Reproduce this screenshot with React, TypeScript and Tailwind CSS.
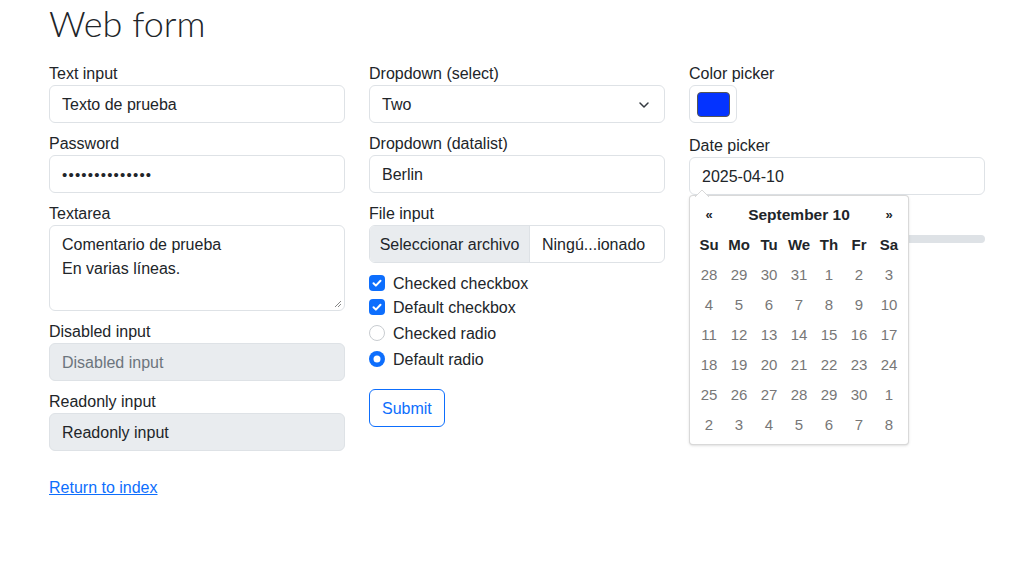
import React from 'react';

const font = { fontFamily: '"Liberation Sans", Arial, sans-serif' };
const titleFont = { fontFamily: 'Lato, "Liberation Sans", sans-serif' };

const Field = ({ label, children }: { label: string; children: React.ReactNode }) => (
    <div className="mb-2">
        <div className="pt-px leading-[23px]">{label}</div>
        {children}
    </div>
);

const Box = ({ children, className = '' }: { children?: React.ReactNode; className?: string }) => (
    <div
        className={`flex h-[38px] items-center rounded-md border border-[#dee2e6] px-3 pt-[2px] ${className}`}
    >
        {children}
    </div>
);

const CheckIcon = () => (
    <svg width="16" height="16" viewBox="0 0 16 16" className="mt-1 shrink-0">
        <rect width="16" height="16" rx="4" fill="#0d6efd" />
        <path d="M4.5 8.2l2.4 2.4 4.6-4.8" fill="none" stroke="#fff" strokeWidth="2" strokeLinecap="round" strokeLinejoin="round" />
    </svg>
);

const Radio = ({ on }: { on?: boolean }) => (
    <svg width="16" height="16" viewBox="0 0 16 16" className="mt-1 shrink-0">
        {on ? (
            <>
                <circle cx="8" cy="8" r="8" fill="#0d6efd" />
                <circle cx="8" cy="8" r="3.5" fill="#fff" />
            </>
        ) : (
            <circle cx="8" cy="8" r="7.5" fill="#fff" stroke="#c8ccd0" />
        )}
    </svg>
);

const Check = ({ label, radio, on, className = '' }: { label: string; radio?: boolean; on?: boolean; className?: string }) => (
    <div className={`flex h-6 gap-2 ${className}`}>
        {radio ? <Radio on={on} /> : <CheckIcon />}
        <span className="pt-px leading-[23px]">{label}</span>
    </div>
);

const weeks = [
    [28, 29, 30, 31, 1, 2, 3],
    [4, 5, 6, 7, 8, 9, 10],
    [11, 12, 13, 14, 15, 16, 17],
    [18, 19, 20, 21, 22, 23, 24],
    [25, 26, 27, 28, 29, 30, 1],
    [2, 3, 4, 5, 6, 7, 8],
];

const Calendar = () => (
    <div className="absolute top-[38px] left-0 z-10 w-[220px] rounded-[4px] border border-black/15 bg-white p-1 shadow-sm">
        <svg width="14" height="8" viewBox="0 0 14 8" className="absolute -top-[7px] left-[5px]">
            <path d="M0 8L7 1l7 7" fill="#fff" stroke="#d9d9d9" />
        </svg>
        <div className="flex h-[30px] items-center font-bold">
            <span className="w-[30px] text-center text-[13px]">«</span>
            <span className="w-[150px] text-center text-[15.5px]">September 10</span>
            <span className="w-[30px] text-center text-[13px]">»</span>
        </div>
        <div className="grid grid-cols-[repeat(7,30px)] text-center text-[15px]">
            {['Su', 'Mo', 'Tu', 'We', 'Th', 'Fr', 'Sa'].map((d) => (
                <div key={d} className="flex h-[30px] items-center justify-center font-bold">
                    {d}
                </div>
            ))}
            {weeks.flat().map((n, i) => (
                <div key={i} className="flex h-[30px] items-center justify-center text-[#777]">
                    {n}
                </div>
            ))}
        </div>
    </div>
);

export default function App() {
    return (
        <div className="min-h-[561px] bg-white text-base text-[#212529]" style={font}>
            <div className="mx-auto w-[960px] px-3 pt-px">
                <h1 className="mb-4 text-[36px] leading-[44px] font-light" style={titleFont}>
                    Web form
                </h1>
                <div className="grid grid-cols-3 gap-x-6">
                    <div>
                        <Field label="Text input">
                            <Box>Texto de prueba</Box>
                        </Field>
                        <Field label="Password">
                            <Box className="text-[15px] tracking-[1.2px]">••••••••••••••</Box>
                        </Field>
                        <Field label="Textarea">
                            <div className="relative h-[86px] rounded-md border border-[#dee2e6] px-3 pt-[7px] leading-6">
                                <div>Comentario de prueba</div>
                                <div>En varias líneas.</div>
                                <svg width="8" height="8" viewBox="0 0 8 8" className="absolute right-[2px] bottom-[2px]">
                                    <path d="M1 7L7 1M4 7L7 4" stroke="#888" strokeWidth="1" />
                                </svg>
                            </div>
                        </Field>
                        <Field label="Disabled input">
                            <Box className="bg-[#e9ecef] text-[#6c757d]">Disabled input</Box>
                        </Field>
                        <Field label="Readonly input">
                            <Box className="bg-[#e9ecef]">Readonly input</Box>
                        </Field>
                    </div>
                    <div>
                        <Field label="Dropdown (select)">
                            <Box className="justify-between">
                                <span>Two</span>
                                <svg width="16" height="12" viewBox="0 2 16 12">
                                    <path d="M4 6l4 4 4-4" fill="none" stroke="#343a40" strokeWidth="1.5" strokeLinecap="round" strokeLinejoin="round" />
                                </svg>
                            </Box>
                        </Field>
                        <Field label="Dropdown (datalist)">
                            <Box>Berlin</Box>
                        </Field>
                        <Field label="File input">
                            <div className="flex h-[38px] overflow-hidden rounded-md border border-[#dee2e6] pt-px">
                                <div className="-mt-px flex w-[160px] items-center justify-center border-r border-[#dee2e6] bg-[#e9ecef] pt-px whitespace-nowrap">
                                    Seleccionar archivo
                                </div>
                                <div className="flex items-center px-3 whitespace-nowrap">Ningú...ionado</div>
                            </div>
                        </Field>
                        <Check label="Checked checkbox" />
                        <Check label="Default checkbox" />
                        <Check label="Checked radio" radio className="mt-[2px]" />
                        <Check label="Default radio" radio on className="mt-[2px]" />
                        <button className="mt-[18px] h-[38px] rounded-md border border-[#0d6efd] px-3 pt-px text-[#0d6efd]">
                            Submit
                        </button>
                    </div>
                    <div>
                        <div className="mb-[10px]">
                            <div className="pt-px leading-[23px]">Color picker</div>
                            <div className="flex h-[38px] w-12 items-center justify-center rounded-md border border-[#dee2e6]">
                                <div className="h-[25px] w-[33px] rounded-[4px] border border-[#555] bg-[#0433ff]" />
                            </div>
                        </div>
                        <div className="mb-2">
                            <div className="pt-px leading-[23px]">Date picker</div>
                            <div className="relative">
                                <Box>2025-04-10</Box>
                                <Calendar />
                            </div>
                        </div>
                        <div>
                            {/* range label sits under the open calendar */}
                            <div className="invisible leading-6">Example range</div>
                            <div className="flex h-6 items-center">
                                <div className="h-2 w-full rounded-full bg-[#dee2e6]" />
                            </div>
                        </div>
                    </div>
                </div>
                <div className="mt-4 pt-px leading-[23px]">
                    <a href="#" className="text-[#0d6efd] underline">
                        Return to index
                    </a>
                </div>
            </div>
        </div>
    );
}
